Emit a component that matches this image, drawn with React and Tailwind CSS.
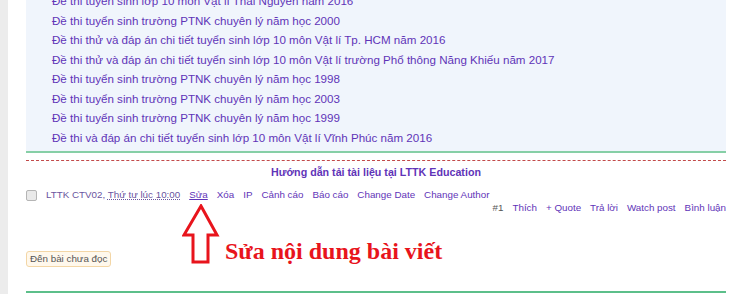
import React from 'react';

const threads = [
  'Đề thi tuyển sinh lớp 10 môn Vật lí Thái Nguyên năm 2016',
  'Đề thi tuyển sinh trường PTNK chuyên lý năm học 2000',
  'Đề thi thử và đáp án chi tiết tuyển sinh lớp 10 môn Vật lí Tp. HCM năm 2016',
  'Đề thi thử và đáp án chi tiết tuyển sinh lớp 10 môn Vật lí trường Phổ thông Năng Khiếu năm 2017',
  'Đề thi tuyển sinh trường PTNK chuyên lý năm học 1998',
  'Đề thi tuyển sinh trường PTNK chuyên lý năm học 2003',
  'Đề thi tuyển sinh trường PTNK chuyên lý năm học 1999',
  'Đề thi và đáp án chi tiết tuyển sinh lớp 10 môn Vật lí Vĩnh Phúc năm 2016',
];

const modLinks = ['Xóa', 'IP', 'Cảnh cáo', 'Báo cáo', 'Change Date', 'Change Author'];
const publicLinks = ['Thích', '+ Quote', 'Trả lời', 'Watch post', 'Bình luận'];

export default function App() {
  return (
    <div className="flex w-[740px] h-[294px] overflow-hidden bg-white" style={{ fontFamily: '"Liberation Sans", Arial, sans-serif' }}>
      {/* left gutter */}
      <div className="w-[8px] shrink-0 bg-[#ececec]" />

      <div className="relative ml-[18px] w-[700px] shrink-0">
        {/* related threads box */}
        <div className="bg-[#f0f5fc] border-b-2 border-[#86cfa6] pb-[4px] pl-[26px]">
          <ul className="-mt-[9px] text-[11.6px] leading-[19.5px] text-[#5f34b8]">
            {threads.map((t) => (
              <li key={t} className="whitespace-nowrap">{t}</li>
            ))}
          </ul>
        </div>

        {/* signature separator */}
        <div className="mt-[7px] border-t border-dashed border-[#c24a4a]" />
        <div className="mt-[3px] text-center text-[10.7px] leading-[16px] font-bold text-[#5f34b8]">
          Hướng dẫn tải tài liệu tại LTTK Education
        </div>

        {/* post meta */}
        <div className="mt-[9px] flex items-center text-[9.8px] leading-[12px]">
          <span className="w-[11px] h-[11px] rounded-[2px] border border-[#b5b5b5] bg-[#e9e9e9]" />
          <span className="ml-[9px] text-[#6a55a0]">
            LTTK CTV02, <span className="underline decoration-dotted">Thứ tư lúc 10:00</span>
          </span>
          <span className="ml-[9px] text-[#5f34b8] underline">Sửa</span>
          {modLinks.map((l) => (
            <span key={l} className="ml-[9px] text-[#5f34b8]">{l}</span>
          ))}
        </div>
        <div className="mt-[1px] flex justify-end gap-[9px] text-[9.8px] leading-[12px]">
          <span className="text-[#555]">#1</span>
          {publicLinks.map((l) => (
            <span key={l} className="text-[#5f34b8]">{l}</span>
          ))}
        </div>

        <div className="mt-[37px] inline-flex items-center h-[16px] px-[3px] rounded-[3px] border border-[#f3d6a6] bg-[#fff8ec] text-[9.8px] text-[#555]">
          Đến bài chưa đọc
        </div>

        <div className="mt-[22px] border-t-2 border-[#5cbf8a]" />

        {/* annotation overlay */}
        <svg className="absolute left-[156px] top-[204px]" width="38" height="60" viewBox="0 0 38 60">
          <path d="M19 2 L35 31 L26 31 L26 58 L11 58 L11 31 L2 31 Z" fill="white" stroke="#e8141c" strokeWidth="3" strokeLinejoin="miter" />
        </svg>
        <div
          className="absolute left-[199px] top-[237px] text-[24px] leading-[28px] font-bold text-[#e8141c] whitespace-nowrap"
          style={{ fontFamily: '"Liberation Serif", "Times New Roman", serif' }}
        >
          Sửa nội dung bài viết
        </div>
      </div>
    </div>
  );
}
